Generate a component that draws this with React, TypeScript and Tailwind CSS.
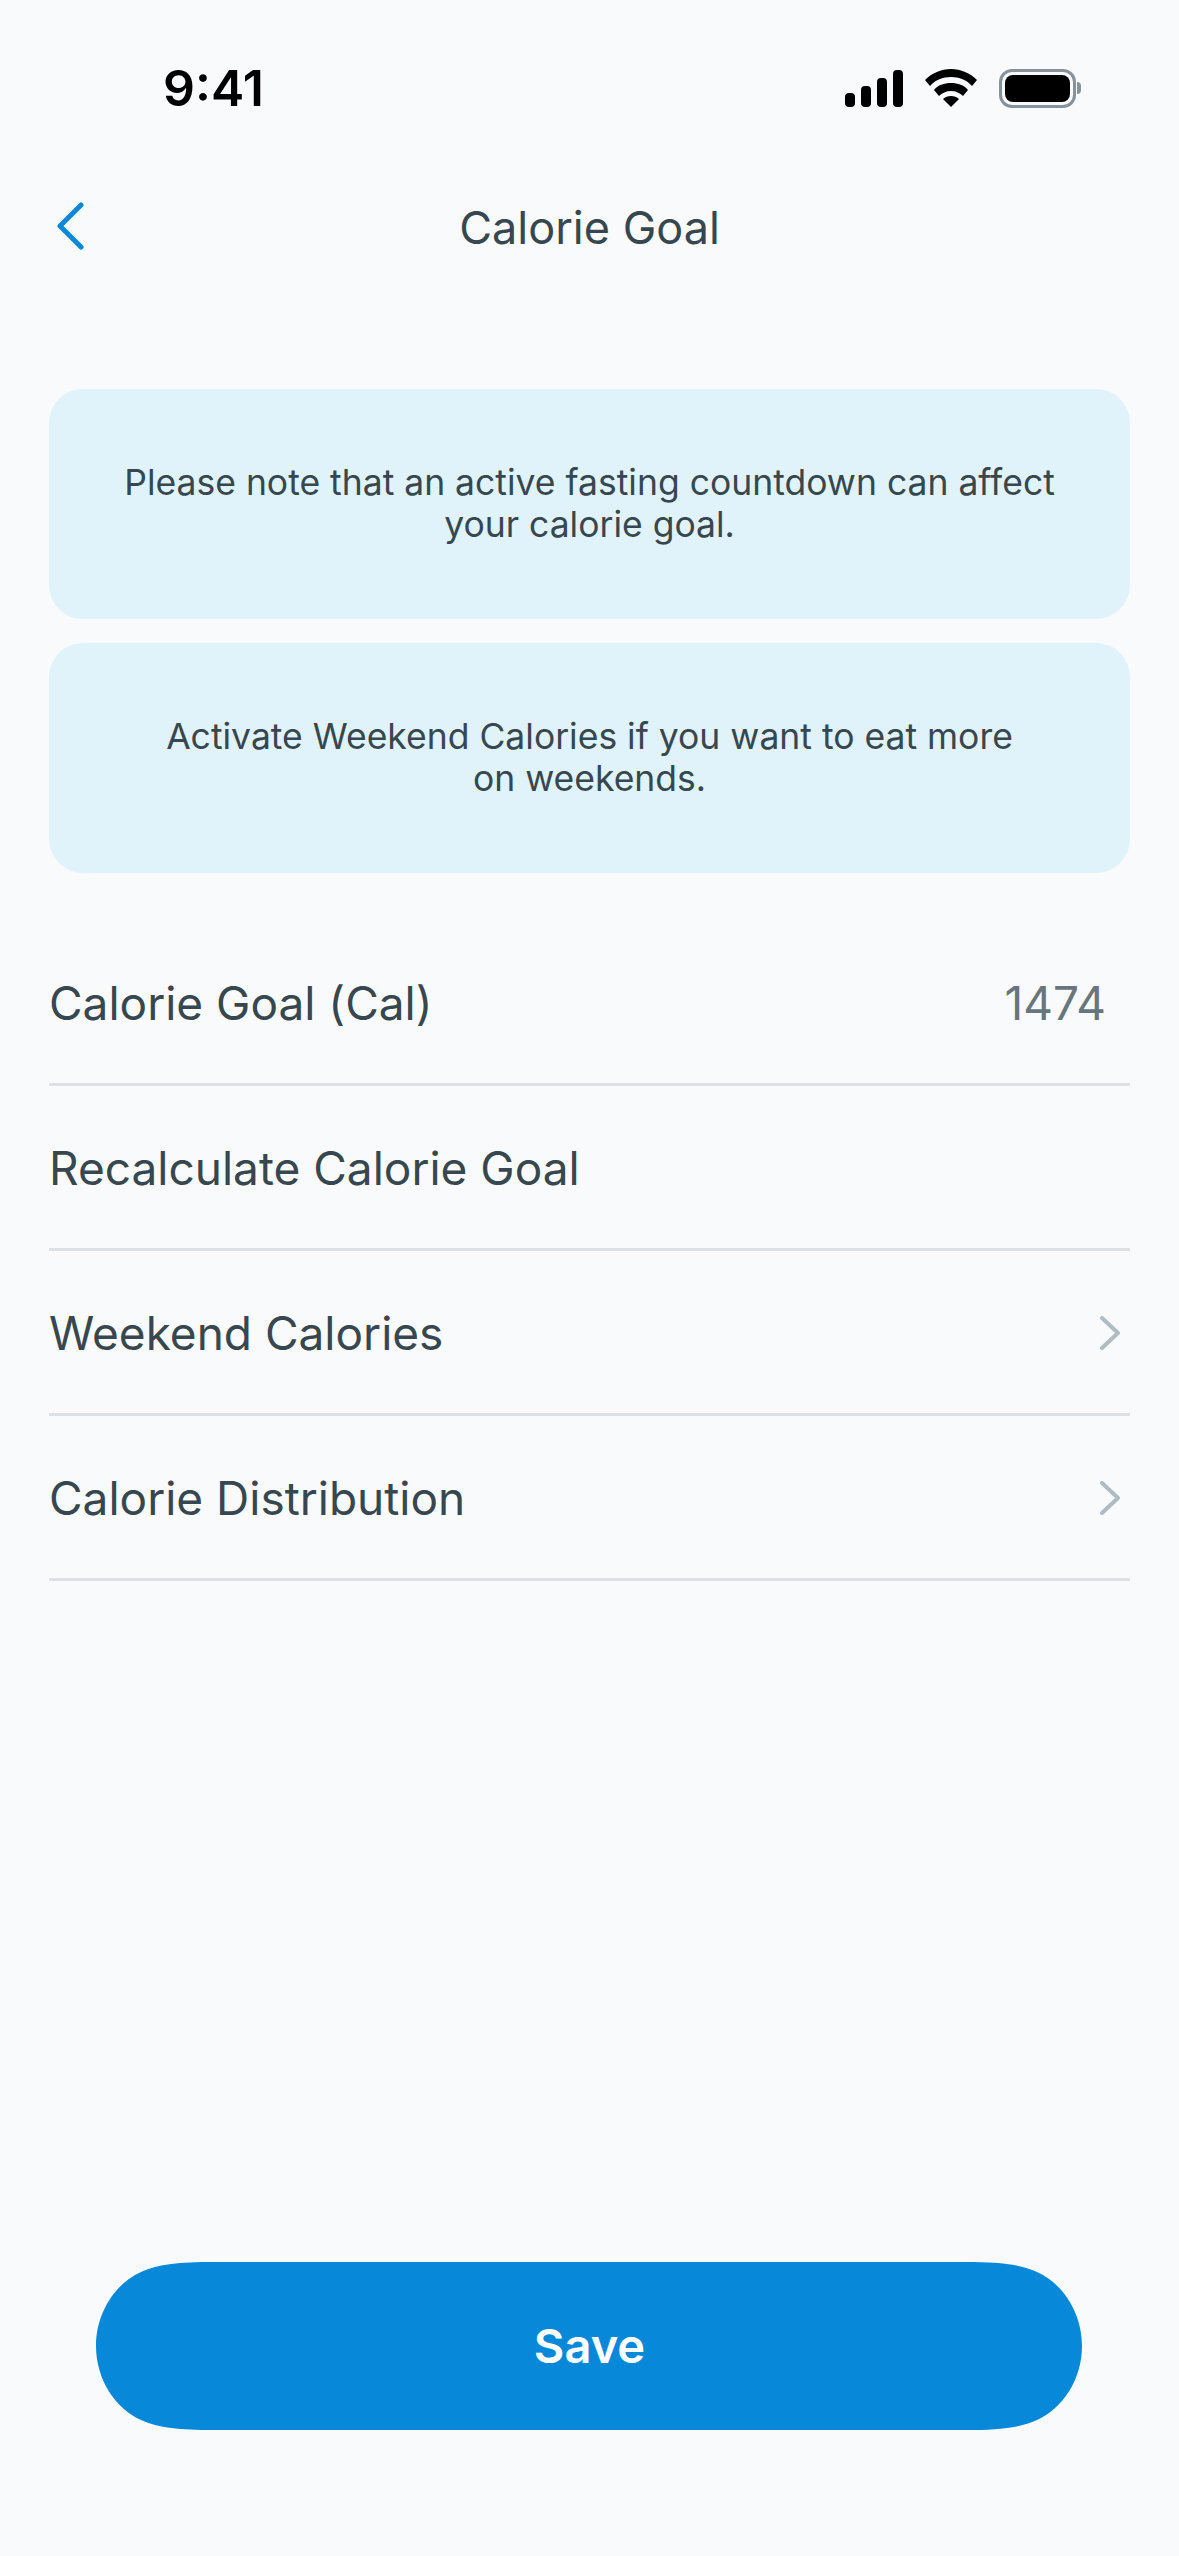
const font = "font-['Inter','Liberation_Sans',sans-serif]";

function SignalIcon() {
  return (
    <svg width="58" height="37" viewBox="0 0 58 37" fill="#000">
      <rect x="0" y="23" width="10" height="14" rx="4" />
      <rect x="16" y="16" width="10" height="21" rx="4" />
      <rect x="32" y="8" width="10" height="29" rx="4" />
      <rect x="48" y="0" width="10" height="37" rx="4" />
    </svg>
  );
}

function WifiIcon() {
  return (
    <svg width="52" height="38" viewBox="0 0 52 38" fill="#000">
      <path d="M26 0C16 0 7 4 0 11l5 6c5-6 13-9 21-9s16 3 21 9l5-6C45 4 36 0 26 0z" />
      <path d="M26 14c-7 0-13 2-17 7l5 6c3-3 7-5 12-5s9 2 12 5l5-6c-4-5-10-7-17-7z" />
      <path d="M26 27c-3 0-6 1-8 3l8 8 8-8c-2-2-5-3-8-3z" />
    </svg>
  );
}

function BatteryIcon() {
  return (
    <div className="flex items-center">
      <div className="h-[39px] w-[77px] rounded-[13px] border-[3px] border-[#87929a] p-[3px]">
        <div className="h-full w-full rounded-[8px] bg-black" />
      </div>
      <div className="ml-px h-[12px] w-[4px] rounded-r-full bg-[#87929a]" />
    </div>
  );
}

function RowChevron() {
  return (
    <svg width="22" height="34" viewBox="0 0 22 34" fill="none" stroke="#afbcc4" strokeWidth="4" strokeLinecap="round" strokeLinejoin="round">
      <path d="M2 2l16 15L2 32" />
    </svg>
  );
}

function Notice({ children }: { children: React.ReactNode }) {
  return (
    <div className="flex h-[230px] items-center justify-center rounded-[34px] bg-[#e0f3fa] px-[60px] text-center text-[35.5px] leading-[42px] text-[#37474f]">
      <p>{children}</p>
    </div>
  );
}

function Row({ label, value, arrow }: { label: string; value?: string; arrow?: boolean }) {
  return (
    <div className="flex h-[165px] items-center justify-between border-b-[3px] border-[#dde1e5] pt-[2px] text-[46px] text-[#37474f]">
      <span>{label}</span>
      {value && <span className="pr-[24px] text-[#68757d]">{value}</span>}
      {arrow && (
        <span className="pr-[8px]">
          <RowChevron />
        </span>
      )}
    </div>
  );
}

export default function App() {
  return (
    <div className={`${font} flex h-[2556px] w-[1179px] flex-col overflow-hidden bg-[#f8fafc]`}>
      {/* STATUS BAR */}
      <div className="flex items-center justify-between pt-[58px] pl-[163px] pr-[98px]">
        <span className="text-[50px] leading-[60px] font-semibold text-black">9:41</span>
        <div className="flex items-center gap-[22px]">
          <SignalIcon />
          <WifiIcon />
          <BatteryIcon />
        </div>
      </div>

      {/* HEADER */}
      <div className="mt-[60px] grid h-[100px] grid-cols-[1fr_auto_1fr] items-center px-[57px]">
        <svg className="mb-[4px]" width="27" height="48" viewBox="0 0 27 48" fill="none" stroke="#0788d9" strokeWidth="5" strokeLinecap="round" strokeLinejoin="round">
          <path d="M24 3L3 24l21 21" />
        </svg>
        <h1 className="text-[45px] font-normal text-[#37474f]">Calorie Goal</h1>
        <div />
      </div>

      <div className="mt-[111px] flex flex-col gap-[24px] px-[49px]">
        <Notice>
          Please note that an active fasting countdown can affect your calorie goal.
        </Notice>
        <Notice>
          Activate Weekend Calories if you want to eat more
          <br />
          on weekends.
        </Notice>
      </div>

      <div className="mt-[48px] flex flex-col px-[49px]">
        <Row label="Calorie Goal (Cal)" value="1474" />
        <Row label="Recalculate Calorie Goal" />
        <Row label="Weekend Calories" arrow />
        <Row label="Calorie Distribution" arrow />
      </div>

      <div className="mt-auto px-[96px] pb-[126px]">
        {/* squircle corners, border-radius alone comes out too oval */}
        <button className="flex h-[168px] w-full items-center justify-center bg-[#0788d9] text-[47px] font-semibold text-white [clip-path:path('M116_0H870C901_0_924_2_941_10C966_21_986_50_986_84C986_118_966_147_941_158C924_166_901_168_870_168H116C85_168_62_166_45_158C20_147_0_118_0_84C0_50_20_21_45_10C62_2_85_0_116_0Z')]">
          Save
        </button>
      </div>
    </div>
  );
}
